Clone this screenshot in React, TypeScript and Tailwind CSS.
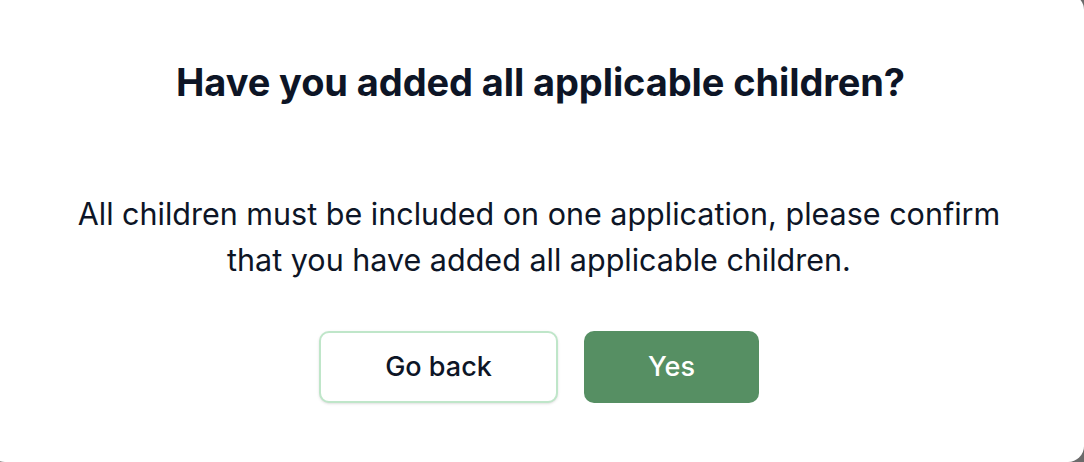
export default function App() {
  return (
    <div className="h-[462px] w-full overflow-hidden bg-[#6b6b6b]">
      <div
        className="-ml-[11px] -mt-[6px] flex h-[468px] w-[calc(100%+11px)] flex-col items-center rounded-2xl bg-white pl-[5px] pt-[65px] text-[#0d1526]"
        style={{ fontFamily: "Inter, 'Noto Sans', sans-serif" }}
      >
        <h2 className="ml-[3px] text-[38px] font-bold leading-[46px] tracking-[-0.1px]">
          Have you added all applicable children?
        </h2>

        <p className="mt-[86px] text-center text-[30.5px] leading-[46px]">
          All children must be included on one application, please confirm
          <br />
          that you have added all applicable children.
        </p>

        <div className="mt-[48px] flex gap-[26px]">
          <button className="h-[72px] w-[239px] rounded-[10px] border-2 border-[#bfe6c9] bg-white text-[27px] font-medium text-[#0d1526] shadow-sm">
            Go back
          </button>
          <button className="h-[72px] w-[175px] rounded-[10px] bg-[#568f63] text-[27px] font-medium text-white">
            Yes
          </button>
        </div>
      </div>
    </div>
  )
}
